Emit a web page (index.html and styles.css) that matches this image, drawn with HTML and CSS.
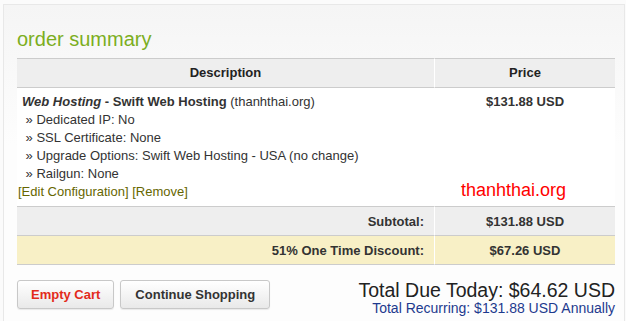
FILE: index.html
```html
<!DOCTYPE html>
<html lang="en">
  <head>
    <title>Order Summary</title>
    <meta name="viewport" content="width=device-width, initial-scale=1.0">
    <link rel="stylesheet" href="styles.css">
  </head>
  <body>
    <div class="page">
      <h2 class="titulo">order summary</h2>
      <div class="cart">
        <table class="summary">
          <tr>
            <th class="desc">Description</th>
            <th class="price">Price</th>
          </tr>
          <tr>
            <td class="desc item">
              <div class="item-lines">
                <strong><em>Web Hosting</em> - Swift Web Hosting</strong> (thanhthai.org)<br>
                &nbsp;&raquo; Dedicated IP: No<br>
                &nbsp;&raquo; SSL Certificate: None<br>
                &nbsp;&raquo; Upgrade Options: Swift Web Hosting - USA (no change)<br>
                &nbsp;&raquo; Railgun: None
              </div>
              <a href="#" class="link">[Edit Configuration]</a> <a href="#" class="link">[Remove]</a>
            </td>
            <td class="price item"><strong>$131.88 USD</strong></td>
          </tr>
          <tr class="subtotal">
            <td class="desc label">Subtotal:</td>
            <td class="price">$131.88 USD</td>
          </tr>
          <tr class="discount">
            <td class="desc label">51% One Time Discount:</td>
            <td class="price">$67.26 USD</td>
          </tr>
        </table>
        <span class="watermark">thanhthai.org</span>
      </div>
      <div class="footer">
        <div class="container-button">
          <button class="btn btn-red">Empty Cart</button>
          <button class="btn">Continue Shopping</button>
        </div>
        <div class="totals">
          <div class="total-due">Total Due Today: $64.62 USD</div>
          <div class="total-recurring">Total Recurring: $131.88 USD Annually</div>
        </div>
      </div>
    </div>
  </body>
</html>
```

FILE: styles.css
```css
body {
  margin: 0;
  background-color: #fbfbfb;
  font-family: "Liberation Sans", Arial, Helvetica, sans-serif;
  color: #333;
}
.page {
  margin: 4px 1px 0 3px;
  padding: 0 9px 0 13px;
  height: 320px;
  border: 1px solid #e8e8e8;
  border-bottom: none;
  background: linear-gradient(#f5f5f5, #fdfdfd 140px, #fdfdfd);
}
.titulo {
  margin: 0 0 7px 0;
  padding-top: 22px;
  font-size: 20px;
  line-height: 24px;
  font-weight: normal;
  color: #7cae1e;
}
.cart {
  position: relative;
}
.summary {
  width: 100%;
  border-collapse: separate;
  border-spacing: 0;
  font-size: 13px;
}
.summary th {
  padding: 6px 5px;
  line-height: 16px;
  background-color: #eeeeee;
  border-top: 1px solid #cccccc;
  border-bottom: 1px solid #cccccc;
  color: #222;
}
.summary .price {
  width: 170px;
  text-align: center;
  border-left: 1px solid #fff;
}
.summary td {
  line-height: 18px;
  vertical-align: top;
}
.summary td.item {
  padding: 5px 5px 5px 1px;
  background-color: #fff;
}
.item-lines {
  padding-left: 4px;
}
.summary td.price.item {
  padding-left: 5px;
}
.link {
  color: #666600;
  text-decoration: none;
}
.subtotal td, .discount td {
  padding: 6px 5px 5px 5px;
  line-height: 17px;
  font-weight: bold;
  border-top: 1px solid #cccccc;
}
.subtotal td {
  background-color: #eeeeee;
}
.discount td {
  background-color: #f8f0c6;
  border-bottom: 1px solid #cccccc;
}
.summary td.label {
  text-align: right;
  padding-right: 10px;
}
.watermark {
  position: absolute;
  left: 444px;
  top: 122px;
  font-size: 18px;
  line-height: 20px;
  color: #ff0000;
}
.footer {
  display: flex;
  justify-content: space-between;
  align-items: flex-start;
  margin-top: 15px;
}
.container-button {
  display: flex;
  gap: 6px;
}
.btn {
  height: 29px;
  padding: 0 14px;
  font-family: "Liberation Sans", Arial, Helvetica, sans-serif;
  font-size: 13px;
  font-weight: bold;
  color: #333;
  border: 1px solid #c8c8c8;
  border-radius: 3px;
  background: linear-gradient(#ffffff, #e9e9e9);
  box-shadow: 0 1px 1px rgba(0, 0, 0, 0.08);
}
.btn-red {
  color: #e32b1b;
  padding: 0 13px;
}
.totals {
  text-align: right;
  margin-top: -1px;
}
.total-due {
  font-size: 19.5px;
  line-height: 22px;
  color: #222;
}
.total-recurring {
  font-size: 14px;
  line-height: 15px;
  color: #1e3a8e;
}
```
